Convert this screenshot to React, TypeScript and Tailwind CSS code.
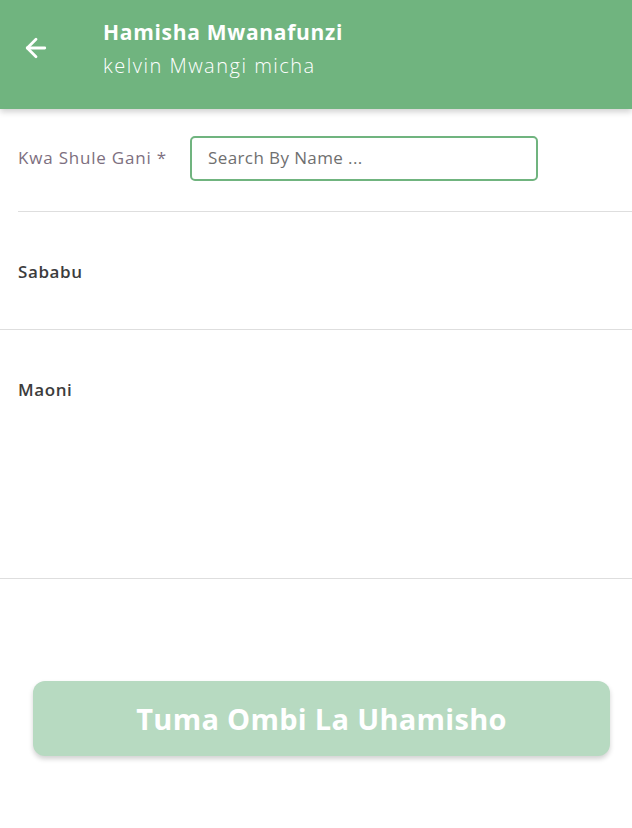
import { ArrowLeft } from 'lucide-react'

const App = () => {
  return (
    <div className="w-[632px] h-[828px] bg-white font-['Open_Sans',sans-serif] overflow-hidden">
      <header className="h-[109px] bg-[#70b47f] flex items-start shadow-[0_3px_6px_rgba(0,0,0,0.18)] relative">
        <div className="w-[103px] h-full flex items-center pl-[21px] pb-[14px]">
          <ArrowLeft className="text-white" size={30} strokeWidth={2.25} />
        </div>
        <div className="flex flex-col pt-[17px]">
          <h1 className="text-white font-bold text-[21px] leading-[30px] tracking-[0.7px]">Hamisha Mwanafunzi</h1>
          <span className="text-white text-[20px] leading-[38px] font-light tracking-[1.5px]">kelvin Mwangi micha</span>
        </div>
      </header>

      <div className="flex items-center h-[44px] mt-[27px] pl-[18px]">
        <label className="w-[172px] text-[#7d6f80] text-[17px] tracking-[0.8px]">Kwa Shule Gani *</label>
        <div className="w-[348px] h-[45px] border-2 border-[#70b47f] rounded-[5px] flex items-center px-[16px]">
          <span className="text-[17px] text-[#6f6f6f] tracking-[0.4px]">Search By Name ...</span>
        </div>
      </div>

      <div className="ml-[18px] mt-[31px] border-t border-[#dedede]" />

      <div className="h-[117px] flex items-center pl-[18px] pt-[2px]">
        <span className="text-[17px] font-semibold text-[#3c3c3c] tracking-[0.6px]">Sababu</span>
      </div>

      <div className="border-t border-[#dedede]" />

      <div className="h-[248px] pl-[18px] pt-[47px]">
        <span className="text-[17px] font-semibold text-[#3c3c3c] tracking-[0.6px]">Maoni</span>
      </div>

      <div className="border-t border-[#dedede]" />

      <div className="pl-[33px] pr-[22px] mt-[102px]">
        <button className="w-full h-[75px] rounded-[12px] bg-[#b7dac1] text-white font-bold text-[29px] tracking-[0.3px] shadow-[0_3px_5px_rgba(0,0,0,0.18)]">
          Tuma Ombi La Uhamisho
        </button>
      </div>
    </div>
  )
}

export default App
